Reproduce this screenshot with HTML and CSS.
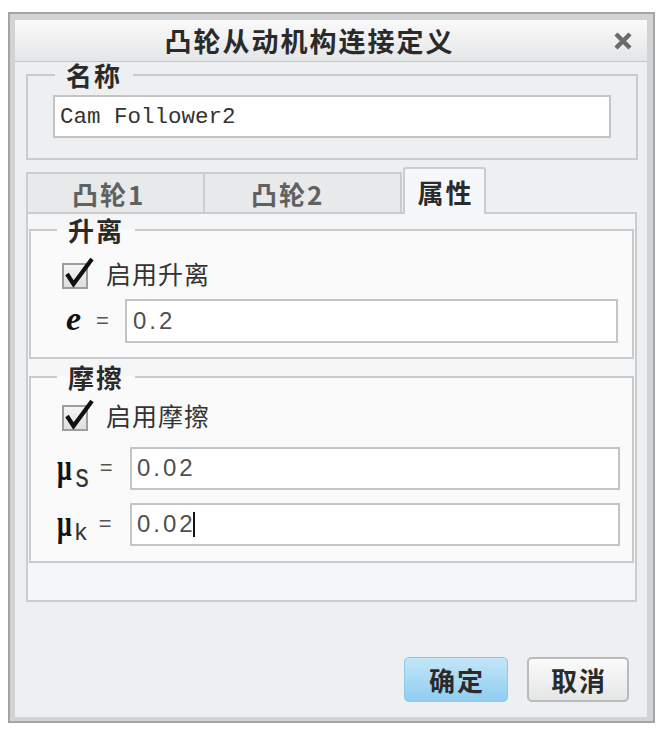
FILE: index.html
```html
<!DOCTYPE html>
<html lang="zh">
<head>
<meta charset="utf-8">
<title>凸轮从动机构连接定义</title>
<link rel="stylesheet" href="styles.css">
</head>
<body>
<div class="dialog">
  <div class="frame">
    <div class="titlebar">
      <div class="title">凸轮从动机构连接定义</div>
      <div class="close">
        <svg width="20" height="20" viewBox="0 0 20 20"><path d="M3 3 L17 17 M17 3 L3 17" stroke="#6b6b6b" stroke-width="4.5" fill="none"/></svg>
      </div>
    </div>
    <div class="content">
      <fieldset class="group name-group">
        <legend>名称</legend>
        <div class="field name-field">Cam Follower2</div>
      </fieldset>

      <div class="tabs">
        <div class="tab t1">凸轮1</div>
        <div class="tab t2">凸轮2</div>
        <div class="tab active">属性</div>
      </div>

      <div class="panel">
        <fieldset class="group sub lift">
          <legend>升离</legend>
          <div class="check-row">
            <svg class="check" width="32" height="32" viewBox="0 0 32 32">
              <defs><linearGradient id="cb" x1="0" y1="0" x2="0" y2="1"><stop offset="0" stop-color="#f6f6f6"/><stop offset="1" stop-color="#dedede"/></linearGradient></defs>
              <rect x="1" y="7" width="24" height="24" fill="url(#cb)" stroke="#9d9d9d" stroke-width="2"/>
              <path d="M5 17 L11.5 27 L30 2" stroke="#111" stroke-width="4.2" fill="none" stroke-linejoin="miter"/>
            </svg>
            <span class="check-label">启用升离</span>
          </div>
          <div class="row e-row">
            <span class="lbl e-lbl"><i class="e">e</i><span class="eq">=</span></span>
            <div class="field num">0.2</div>
          </div>
        </fieldset>

        <fieldset class="group sub friction">
          <legend>摩擦</legend>
          <div class="check-row">
            <svg class="check" width="32" height="32" viewBox="0 0 32 32">
              <defs><linearGradient id="cb2" x1="0" y1="0" x2="0" y2="1"><stop offset="0" stop-color="#f6f6f6"/><stop offset="1" stop-color="#dedede"/></linearGradient></defs>
              <rect x="1" y="7" width="24" height="24" fill="url(#cb2)" stroke="#9d9d9d" stroke-width="2"/>
              <path d="M5 17 L11.5 27 L30 2" stroke="#111" stroke-width="4.2" fill="none" stroke-linejoin="miter"/>
            </svg>
            <span class="check-label">启用摩擦</span>
          </div>
          <div class="row mu-row first">
            <span class="lbl mu-lbl"><span class="mu">μ</span><span class="sub-s">s</span><span class="eq">=</span></span>
            <div class="field num">0.02</div>
          </div>
          <div class="row mu-row">
            <span class="lbl mu-lbl"><span class="mu">μ</span><span class="sub-k">k</span><span class="eq">=</span></span>
            <div class="field num">0.02<span class="caret"></span></div>
          </div>
        </fieldset>
      </div>

      <div class="buttons">
        <div class="btn ok">确定</div>
        <div class="btn cancel">取消</div>
      </div>
    </div>
  </div>
</div>
</body>
</html>
```

FILE: styles.css
```css
html, body {
  margin: 0;
  padding: 0;
  background: #ffffff;
}

body {
  font-family: "Noto Sans CJK SC", "Noto Sans", sans-serif;
  color: #2b2b2b;
}

.dialog {
  margin: 12px 0 0 8px;
  width: 647px;
  height: 711px;
  box-sizing: border-box;
  border: 2px solid #a3a4a5;
}

.frame {
  height: 100%;
  box-sizing: border-box;
  border-style: solid;
  border-color: #d2d3d4;
  border-width: 6px 6px 4px 5px;
  background: #eeeff0;
  display: flex;
  flex-direction: column;
}

/* Title bar */
.titlebar {
  height: 41px;
  flex: none;
  display: flex;
  align-items: center;
  background: linear-gradient(#fafafa, #e4e5e6);
  border-bottom: 1px solid #c4c5c6;
}

.title {
  flex: 1;
  text-align: center;
  font-size: 27px;
  line-height: 41px;
  font-weight: bold;
  letter-spacing: 2px;
  color: #2a2a2a;
  padding-left: 2px;
}

.close {
  width: 45px;
  flex: none;
  display: flex;
  align-items: center;
  padding-left: 11px;
  box-sizing: border-box;
}

.close svg {
  display: block;
}

.content {
  flex: 1;
  display: flex;
  flex-direction: column;
}

/* Group boxes */
.group {
  margin: 0;
  min-width: 0;
  border: 2px solid #c9cacb;
}

.group legend {
  padding: 0 11px;
  font-size: 26px;
  line-height: 26px;
  font-weight: bold;
  letter-spacing: 2px;
  color: #2a2a2a;
}

.name-group {
  margin: 0 9px 0 11px;
  padding: 7px 25px 20px 25px;
}

.name-group legend {
  margin-left: 2px;
}

/* Fields */
.field {
  background: #ffffff;
  border: 2px solid #c3c4c5;
  box-sizing: border-box;
  display: flex;
  align-items: center;
}

.name-field {
  height: 43px;
  padding-left: 5px;
  font-family: "Liberation Mono", "DejaVu Sans Mono", monospace;
  font-size: 22.5px;
  color: #333;
}

.num {
  flex: 1;
  height: 44px;
  padding-left: 6px;
  font-family: "Liberation Sans", Arial, sans-serif;
  font-size: 24px;
  letter-spacing: 3px;
  color: #4f4f4f;
}

.caret {
  display: inline-block;
  width: 2px;
  height: 25px;
  background: #111;
  margin-left: -3px;
}

/* Tabs */
.tabs {
  margin: 7px 10px 0 11px;
  height: 45px;
  display: flex;
  align-items: flex-end;
  flex: none;
}

.tab {
  box-sizing: border-box;
  font-size: 26px;
  font-weight: bold;
  letter-spacing: 2px;
  display: flex;
  align-items: center;
}

.t1, .t2 {
  height: 40px;
  background: #e8e9ea;
  color: #616161;
  border: 2px solid #cbcccd;
  border-bottom: none;
}

.t1 {
  width: 179px;
  padding-left: 44px;
}

.t2 {
  width: 197px;
  padding-left: 46px;
  border-left: none;
}

.tab.active {
  width: 83px;
  height: 47px;
  margin-left: 1px;
  margin-bottom: -2px;
  position: relative;
  z-index: 1;
  justify-content: center;
  background: #f6f7f8;
  color: #2a2a2a;
  border: 2px solid #cbcccd;
  border-bottom: none;
  border-radius: 3px 3px 0 0;
  padding-left: 2px;
}

/* Panel */
.panel {
  margin: 0 10px 0 11px;
  height: 390px;
  flex: none;
  box-sizing: border-box;
  border: 2px solid #cbcccd;
  background: #f5f6f7;
  padding: 0 1px;
}

.sub {
  background: #fafafa;
  padding-left: 26px;
  padding-right: 14px;
}

.lift {
  margin-top: 3px;
  padding-top: 14px;
  padding-bottom: 14px;
}

.friction {
  margin-top: 5px;
  padding-top: 9px;
  padding-bottom: 15px;
}

.check-row {
  height: 32px;
  display: flex;
  align-items: center;
  padding-left: 5px;
}

.check {
  display: block;
  flex: none;
}

.check-label {
  margin-left: 12px;
  font-size: 25px;
  letter-spacing: 1px;
  color: #333;
  line-height: 32px;
}

.row {
  display: flex;
  align-items: center;
}

.e-row {
  margin-top: 10px;
}

.mu-row {
  margin-top: 12px;
  margin-right: -2px;
}

.mu-row.first {
  margin-top: 15px;
}

.mu-row .num {
  height: 43px;
  padding-left: 5px;
}

.lbl {
  flex: none;
  display: flex;
  align-items: center;
  height: 44px;
}

.e-lbl {
  width: 68px;
}

.e {
  font-family: "Liberation Serif", "DejaVu Serif", serif;
  font-weight: bold;
  font-style: italic;
  font-size: 34px;
  line-height: 34px;
  margin-left: 9px;
  margin-top: -4px;
  color: #111;
}

.eq {
  font-family: "Liberation Sans", Arial, sans-serif;
  font-size: 22px;
  color: #555;
}

.e-lbl .eq {
  margin-left: 15px;
}

.mu-lbl {
  width: 73px;
}

.mu {
  display: inline-block;
  font-family: "Liberation Serif", "DejaVu Serif", serif;
  font-weight: bold;
  font-size: 26px;
  line-height: 26px;
  color: #111;
  margin-top: 0;
  transform: scaleY(1.45);
}

.sub-s, .sub-k {
  display: inline-block;
  font-family: "Liberation Sans", Arial, sans-serif;
  font-size: 24px;
  line-height: 24px;
  color: #333;
  margin-top: 16px;
  margin-left: 3px;
}

.sub-s {
  transform: scale(1.1, 1.35);
  margin-left: 4px;
}

.mu-lbl .eq {
  margin-left: 12px;
}

/* Buttons */
.buttons {
  margin-top: 55px;
  padding-right: 18px;
  display: flex;
  justify-content: flex-end;
  gap: 19px;
}

.btn {
  height: 45px;
  box-sizing: border-box;
  border-radius: 5px;
  display: flex;
  align-items: center;
  justify-content: center;
  font-size: 26px;
  font-weight: bold;
  letter-spacing: 2px;
  padding-left: 2px;
  color: #2a2a2a;
}

.ok {
  width: 104px;
  background: linear-gradient(#c4e6f8, #8fcdf1);
  border: 1px solid #8ec6e6;
}

.cancel {
  width: 102px;
  background: linear-gradient(#fbfbfb, #e4e5e6);
  border: 2px solid #b9babb;
}
```
